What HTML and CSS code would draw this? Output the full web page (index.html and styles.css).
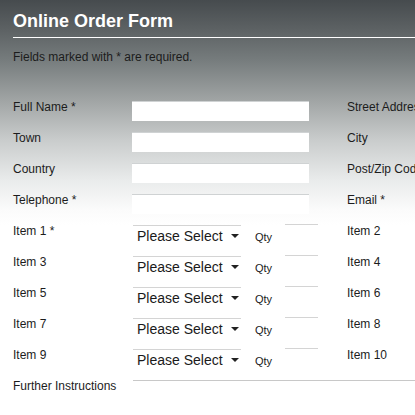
FILE: index.html
```html
<!DOCTYPE html>
<html>
<head>
<meta charset="utf-8">
<link rel="stylesheet" href="styles.css">
</head>
<body>
<div class="page">
  <h1 class="title">Online Order Form</h1>
  <p class="note">Fields marked with * are required.</p>
  <div class="form">
    <div class="label">Full Name *</div><div class="field"><div class="input"></div></div><div></div><div class="label">Street Address *</div>
    <div class="label">Town</div><div class="field"><div class="input"></div></div><div></div><div class="label">City</div>
    <div class="label">Country</div><div class="field"><div class="input"></div></div><div></div><div class="label">Post/Zip Code</div>
    <div class="label">Telephone *</div><div class="field"><div class="input"></div></div><div></div><div class="label">Email *</div>

    <div class="label">Item 1 *</div><div class="field item"><div class="select">Please Select<span class="arrow"></span></div><span class="qty">Qty</span><div class="qtybox"></div></div><div></div><div class="label">Item 2</div>
    <div class="label">Item 3</div><div class="field item"><div class="select">Please Select<span class="arrow"></span></div><span class="qty">Qty</span><div class="qtybox"></div></div><div></div><div class="label">Item 4</div>
    <div class="label">Item 5</div><div class="field item"><div class="select">Please Select<span class="arrow"></span></div><span class="qty">Qty</span><div class="qtybox"></div></div><div></div><div class="label">Item 6</div>
    <div class="label">Item 7</div><div class="field item"><div class="select">Please Select<span class="arrow"></span></div><span class="qty">Qty</span><div class="qtybox"></div></div><div></div><div class="label">Item 8</div>
    <div class="label">Item 9</div><div class="field item"><div class="select">Please Select<span class="arrow"></span></div><span class="qty">Qty</span><div class="qtybox"></div></div><div></div><div class="label">Item 10</div>

    <div class="label">Further Instructions</div><div class="field wide"><div class="textarea"></div></div>
  </div>
</div>
</body>
</html>
```
FILE: styles.css
```css
html, body {
  margin: 0;
  padding: 0;
  overflow: hidden;
}
body {
  width: 415px;
  height: 415px;
  font-family: "Liberation Sans", Arial, sans-serif;
}
.page {
  height: 415px;
  box-sizing: border-box;
  padding: 10px 0 0 13px;
  background: linear-gradient(to bottom, #464b4e 0px, #5d6264 30px, #767c7d 60px, #a0a4a4 100px, #c9cccc 140px, #e9ebeb 180px, #fbfbfb 210px, #ffffff 225px);
  color: #1c1c1c;
}
.title {
  margin: 0;
  font-size: 18px;
  line-height: 22px;
  font-weight: bold;
  color: #ffffff;
  padding-bottom: 5px;
  border-bottom: 1px solid #ffffff;
}
.note {
  margin: 12px 0 0 0;
  font-size: 12px;
  line-height: 14px;
}
.form {
  margin-top: 35px;
  display: grid;
  grid-template-columns: 119px 177px 38px 1fr;
  grid-auto-rows: 31px;
  align-items: start;
  font-size: 12px;
}
.label {
  line-height: 16px;
  white-space: nowrap;
}
.field {
  padding-top: 2px;
}
.input {
  height: 19px;
  background: #ffffff;
  border-top: 1px solid #cfd2d3;
}
.item {
  display: flex;
  align-items: flex-start;
  padding-left: 1px;
  padding-top: 0;
}
.select {
  flex-shrink: 0;
  margin-top: 2px;
  width: 108px;
  height: 20px;
  box-sizing: border-box;
  border-top: 1px solid #d4d4d4;
  padding-left: 4px;
  font-size: 14px;
  line-height: 20px;
  color: #1a1a1a;
  display: flex;
  align-items: center;
  white-space: nowrap;
  background: #ffffff;
}
.arrow {
  display: inline-block;
  margin-left: 8px;
  margin-top: 1px;
  width: 0;
  height: 0;
  border-left: 4px solid transparent;
  border-right: 4px solid transparent;
  border-top: 4px solid #222;
}
.qty {
  flex-shrink: 0;
  margin-left: 14px;
  margin-top: 6px;
  font-size: 11px;
  line-height: 16px;
}
.qtybox {
  flex-shrink: 0;
  margin-left: 13px;
  margin-top: 1px;
  width: 33px;
  height: 20px;
  border-top: 1px solid #d4d4d4;
}
.wide {
  grid-column: 2 / 5;
  margin-left: 1px;
}
.textarea {
  height: 40px;
  border-top: 1px solid #c8c8c8;
}
```
